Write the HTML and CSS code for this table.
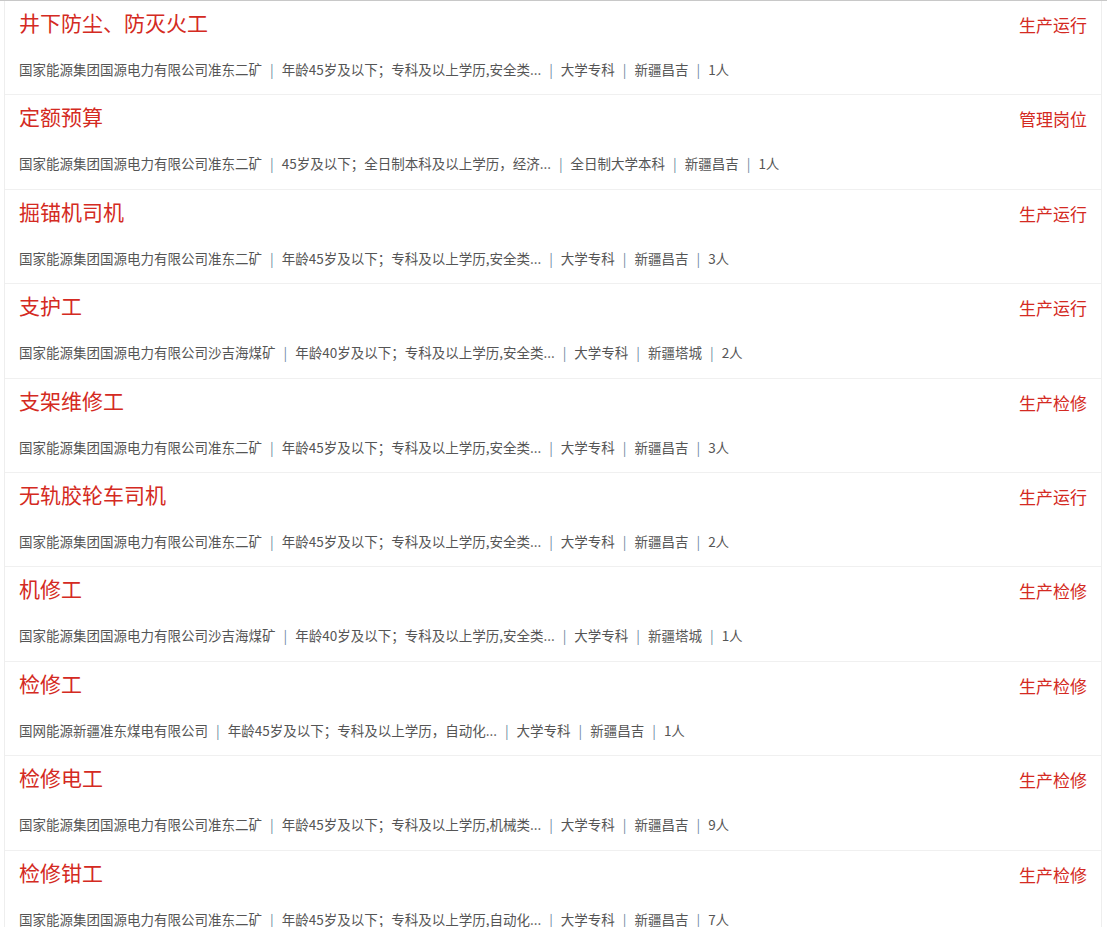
FILE: index.html
```html
<!DOCTYPE html>
<html lang="zh-CN">
<head>
    <meta charset="UTF-8">
    <title>招聘岗位</title>
    <link rel="stylesheet" href="styles.css">
</head>
<body>

    <!-- 岗位列表 -->
    <div class="job-list">
        <div class="job-item">
            <div class="job-head">
                <span class="job-title">井下防尘、防灭火工</span>
                <span class="job-type">生产运行</span>
            </div>
            <div class="job-meta">国家能源集团国源电力有限公司准东二矿<span class="sep">|</span>年龄45岁及以下；专科及以上学历,安全类...<span class="sep">|</span>大学专科<span class="sep">|</span>新疆昌吉<span class="sep">|</span>1人</div>
        </div>
        <div class="job-item">
            <div class="job-head">
                <span class="job-title">定额预算</span>
                <span class="job-type">管理岗位</span>
            </div>
            <div class="job-meta">国家能源集团国源电力有限公司准东二矿<span class="sep">|</span>45岁及以下；全日制本科及以上学历，经济...<span class="sep">|</span>全日制大学本科<span class="sep">|</span>新疆昌吉<span class="sep">|</span>1人</div>
        </div>
        <div class="job-item">
            <div class="job-head">
                <span class="job-title">掘锚机司机</span>
                <span class="job-type">生产运行</span>
            </div>
            <div class="job-meta">国家能源集团国源电力有限公司准东二矿<span class="sep">|</span>年龄45岁及以下；专科及以上学历,安全类...<span class="sep">|</span>大学专科<span class="sep">|</span>新疆昌吉<span class="sep">|</span>3人</div>
        </div>
        <div class="job-item">
            <div class="job-head">
                <span class="job-title">支护工</span>
                <span class="job-type">生产运行</span>
            </div>
            <div class="job-meta">国家能源集团国源电力有限公司沙吉海煤矿<span class="sep">|</span>年龄40岁及以下；专科及以上学历,安全类...<span class="sep">|</span>大学专科<span class="sep">|</span>新疆塔城<span class="sep">|</span>2人</div>
        </div>
        <div class="job-item">
            <div class="job-head">
                <span class="job-title">支架维修工</span>
                <span class="job-type">生产检修</span>
            </div>
            <div class="job-meta">国家能源集团国源电力有限公司准东二矿<span class="sep">|</span>年龄45岁及以下；专科及以上学历,安全类...<span class="sep">|</span>大学专科<span class="sep">|</span>新疆昌吉<span class="sep">|</span>3人</div>
        </div>
        <div class="job-item">
            <div class="job-head">
                <span class="job-title">无轨胶轮车司机</span>
                <span class="job-type">生产运行</span>
            </div>
            <div class="job-meta">国家能源集团国源电力有限公司准东二矿<span class="sep">|</span>年龄45岁及以下；专科及以上学历,安全类...<span class="sep">|</span>大学专科<span class="sep">|</span>新疆昌吉<span class="sep">|</span>2人</div>
        </div>
        <div class="job-item">
            <div class="job-head">
                <span class="job-title">机修工</span>
                <span class="job-type">生产检修</span>
            </div>
            <div class="job-meta">国家能源集团国源电力有限公司沙吉海煤矿<span class="sep">|</span>年龄40岁及以下；专科及以上学历,安全类...<span class="sep">|</span>大学专科<span class="sep">|</span>新疆塔城<span class="sep">|</span>1人</div>
        </div>
        <div class="job-item">
            <div class="job-head">
                <span class="job-title">检修工</span>
                <span class="job-type">生产检修</span>
            </div>
            <div class="job-meta">国网能源新疆准东煤电有限公司<span class="sep">|</span>年龄45岁及以下；专科及以上学历，自动化...<span class="sep">|</span>大学专科<span class="sep">|</span>新疆昌吉<span class="sep">|</span>1人</div>
        </div>
        <div class="job-item">
            <div class="job-head">
                <span class="job-title">检修电工</span>
                <span class="job-type">生产检修</span>
            </div>
            <div class="job-meta">国家能源集团国源电力有限公司准东二矿<span class="sep">|</span>年龄45岁及以下；专科及以上学历,机械类...<span class="sep">|</span>大学专科<span class="sep">|</span>新疆昌吉<span class="sep">|</span>9人</div>
        </div>
        <div class="job-item">
            <div class="job-head">
                <span class="job-title">检修钳工</span>
                <span class="job-type">生产检修</span>
            </div>
            <div class="job-meta">国家能源集团国源电力有限公司准东二矿<span class="sep">|</span>年龄45岁及以下；专科及以上学历,自动化...<span class="sep">|</span>大学专科<span class="sep">|</span>新疆昌吉<span class="sep">|</span>7人</div>
        </div>
    </div>

</body>
</html>
```

FILE: styles.css
```css
body {
    margin: 0;
    font-family: "Noto Sans CJK SC", "Noto Sans", sans-serif;
    background: #fff;
    border-top: 1px solid #c8c8c8;
}

.job-list {
    margin: 0 5px 0 4px;
    border-left: 1px solid #eee;
    border-right: 1px solid #eee;
}

.job-item {
    box-sizing: border-box;
    height: 94.4px;
    padding: 6px 14px 0;
    border-bottom: 1px solid #f0f0f0;
}

.job-head {
    display: flex;
    justify-content: space-between;
    align-items: flex-start;
    height: 30px;
}

.job-title {
    font-size: 21px;
    line-height: 30px;
    color: #d42a22;
}

.job-type {
    margin-top: 3px;
    font-size: 17px;
    line-height: 30px;
    color: #d42a22;
}

.job-meta {
    margin-top: 22px;
    font-size: 13.5px;
    line-height: 20px;
    color: #555;
    white-space: nowrap;
}

.sep {
    margin: 0 8px;
    color: #6f8ba2;
}
```
